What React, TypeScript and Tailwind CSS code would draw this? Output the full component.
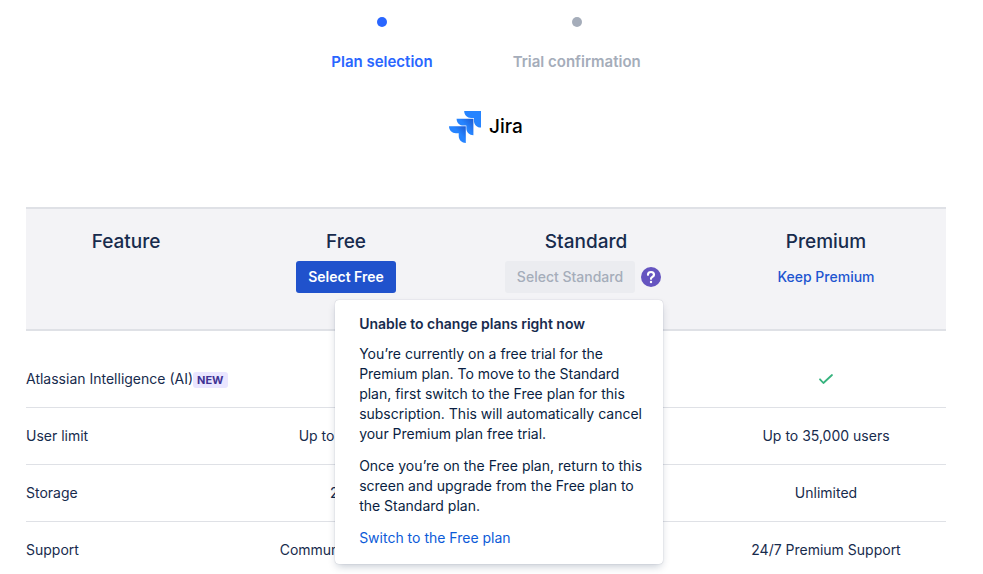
import type { ReactNode } from "react";

interface StepProps {
  label: string;
  active?: boolean;
}

const Step = ({ label, active }: StepProps) => {
  return (
    <li
      className={`flex flex-col items-center gap-6 text-[15px] leading-[22px] font-semibold ${active ? "text-[#2966ff]" : "text-[#a5adba]"}`}
      aria-current={active ? "step" : undefined}
    >
      <span className="size-2.5 rounded-full bg-current" />
      {label}
    </li>
  );
};

const JiraLogo = () => {
  return (
    <div className="flex items-center justify-center gap-2">
      <svg width="32" height="32" viewBox="4 4 24 24" aria-hidden="true">
        <defs>
          <linearGradient id="jira-mid" x1="22" y1="10" x2="16" y2="15" gradientUnits="userSpaceOnUse">
            <stop offset="0.1" stopColor="#1f5fd6" />
            <stop offset="1" stopColor="#2684ff" />
          </linearGradient>
          <linearGradient id="jira-low" x1="16.5" y1="15.5" x2="11.5" y2="20.5" gradientUnits="userSpaceOnUse">
            <stop offset="0.1" stopColor="#1f5fd6" />
            <stop offset="1" stopColor="#2684ff" />
          </linearGradient>
        </defs>
        <path
          fill="#2684ff"
          d="M28 4H15.4c0 2.9 2.3 5.2 5.2 5.2h2.1v2.05c0 2.9 2.4 5.2 5.3 5.2V4Z"
        />
        <path
          fill="url(#jira-mid)"
          d="M22.3 9.75H9.7c0 2.9 2.3 5.2 5.2 5.2H17V17c0 2.9 2.4 5.2 5.3 5.2V9.75Z"
        />
        <path
          fill="url(#jira-low)"
          d="M16.6 15.5H4c0 2.9 2.3 5.2 5.2 5.2h2.1v2.1c0 2.9 2.4 5.2 5.3 5.2V15.5Z"
        />
      </svg>
      <span className="text-[19px] leading-7 font-medium text-black">Jira</span>
    </div>
  );
};

const CheckMark = () => {
  return (
    <svg className="mx-auto" width="16" height="16" viewBox="0 0 16 16" role="img" aria-label="Included">
      <path
        d="M2 8.3 5.4 12 14 4"
        fill="none"
        stroke="#36b37e"
        strokeWidth="1.8"
        strokeLinecap="round"
        strokeLinejoin="round"
      />
    </svg>
  );
};

const PlanPopover = () => {
  return (
    <div
      role="dialog"
      aria-labelledby="popover-title"
      className="absolute top-full right-0 z-10 mt-[11px] w-[328px] rounded bg-white pt-3.5 pr-4 pb-4 pl-6 text-left text-sm font-normal text-[#091e42] shadow-[0_4px_8px_-2px_#091e4240,0_0_1px_#091e424f]"
    >
      <h2 id="popover-title" className="mb-2.5 font-semibold text-[#172b4d]">
        Unable to change plans right now
      </h2>
      <p className="mb-3">
        You’re currently on a free trial for the Premium plan. To move to the Standard plan, first switch to the Free
        plan for this subscription. This will automatically cancel your Premium plan free trial.
      </p>
      <p className="mb-3">
        Once you’re on the Free plan, return to this screen and upgrade from the Free plan to the Standard plan.
      </p>
      <a href="#free" className="text-[#0c5bd8]">
        Switch to the Free plan
      </a>
    </div>
  );
};

const HelpButton = () => {
  return (
    <div className="relative mr-1 flex">
      <button type="button" aria-label="Why is this plan unavailable?" className="size-6">
        <svg width="24" height="24" viewBox="0 0 24 24" aria-hidden="true">
          <circle cx="12" cy="12" r="10" fill="#6554c0" />
          <path
            d="M9 9.8C9 7.9 10.3 7 12 7s3 1 3 2.7c0 2.2-3 2.2-3 4.1"
            fill="none"
            stroke="#fff"
            strokeWidth="2.2"
            strokeLinecap="round"
          />
          <circle cx="12" cy="17" r="1.2" fill="#fff" />
        </svg>
      </button>
      <PlanPopover />
    </div>
  );
};

interface PlanHeaderProps {
  name: string;
  children?: ReactNode;
}

const PlanHeader = ({ name, children }: PlanHeaderProps) => {
  return (
    <th scope="col" className="h-[124px] border-y-2 border-[#dfe1e6] bg-[#f3f3f6] pt-5 align-top font-normal">
      <div className="text-[19px] leading-[26px] font-medium">{name}</div>
      <div className="mt-1.5 flex h-8 items-center justify-center gap-1 text-sm">{children}</div>
    </th>
  );
};

interface FeatureRow {
  feature: string;
  isNew?: boolean;
  free?: ReactNode;
  standard?: ReactNode;
  premium?: ReactNode;
}

const rows: FeatureRow[] = [
  { feature: "Atlassian Intelligence (AI)", isNew: true, premium: <CheckMark /> },
  { feature: "User limit", free: "Up to 10 users", premium: "Up to 35,000 users" },
  { feature: "Storage", free: "2 GB", premium: "Unlimited" },
  { feature: "Support", free: "Community Support", premium: "24/7 Premium Support" },
];

const App = () => {
  return (
    <main className="pt-[17px] pr-[37px] pl-[26px] font-['Inter',sans-serif] text-sm text-[#172b4d]">
      {/* Progress */}
      <ol className="flex justify-center gap-20">
        <Step label="Plan selection" active />
        <Step label="Trial confirmation" />
      </ol>

      <div className="mt-[38px]">
        <JiraLogo />
      </div>

      {/* Plan comparison */}
      <table className="mt-16 w-full table-fixed border-separate border-spacing-0">
        <colgroup>
          <col className="w-[200px]" />
          <col />
          <col />
          <col />
        </colgroup>
        <thead>
          <tr>
            <PlanHeader name="Feature" />
            <PlanHeader name="Free">
              <button type="button" className="h-8 rounded-[3px] bg-[#2052cc] px-3 font-semibold text-white">
                Select Free
              </button>
            </PlanHeader>
            <PlanHeader name="Standard">
              <button type="button" disabled className="h-8 rounded-[3px] bg-[#ebecf0] px-3 font-medium text-[#a5adba]">
                Select Standard
              </button>
              <HelpButton />
            </PlanHeader>
            <PlanHeader name="Premium">
              <button type="button" className="h-8 px-3 font-medium text-[#1d55d0]">
                Keep Premium
              </button>
            </PlanHeader>
          </tr>
        </thead>
        <tbody>
          <tr aria-hidden="true">
            <td colSpan={4} className="h-5 p-0" />
          </tr>
          {rows.map((row) => (
            <tr key={row.feature} className="text-center">
              <th scope="row" className="h-[57px] border-b border-[#dfe1e6] text-left font-normal whitespace-nowrap">
                {row.feature}
                {row.isNew && (
                  <span className="rounded-[3px] bg-[#eae6ff] px-1 py-px text-[11px] font-bold text-[#403294]">
                    NEW
                  </span>
                )}
              </th>
              <td className="border-b border-[#dfe1e6]">{row.free}</td>
              <td className="border-b border-[#dfe1e6]">{row.standard}</td>
              <td className="border-b border-[#dfe1e6]">{row.premium}</td>
            </tr>
          ))}
        </tbody>
      </table>
    </main>
  );
};

export default App;
